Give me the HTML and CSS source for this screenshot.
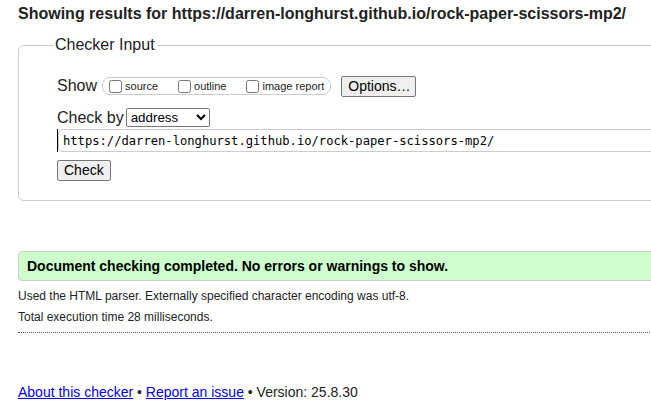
FILE: index.html
```html
<!DOCTYPE html>
<html lang="en">
<head>
<meta charset="utf-8">
<title>Showing results for https://darren-longhurst.github.io/rock-paper-scissors-mp2/ - Nu Html Checker</title>
<link rel="stylesheet" href="styles.css">
</head>
<body>
<div class="page">
  <h2 class="results-title">Showing results for https://darren-longhurst.github.io/rock-paper-scissors-mp2/</h2>
  <form class="checker">
    <fieldset class="checker-input">
      <legend class="legend">Checker Input</legend>
      <div class="row show-row">
        <span class="row-label">Show</span>
        <span class="show-group">
          <label class="opt"><input type="checkbox" class="cb"><span>source</span></label>
          <label class="opt"><input type="checkbox" class="cb"><span>outline</span></label>
          <label class="opt last"><input type="checkbox" class="cb"><span>image report</span></label>
        </span>
        <button type="button" class="btn options">Options…</button>
      </div>
      <div class="row checkby-row">
        <span class="row-label">Check by</span>
        <select class="select">
          <option>address</option>
          <option>file upload</option>
          <option>text input</option>
        </select>
      </div>
      <div class="url-row">
        <input class="url" type="text" value="https://darren-longhurst.github.io/rock-paper-scissors-mp2/">
      </div>
      <div class="submit-row">
        <button type="button" class="btn check">Check</button>
      </div>
    </fieldset>
  </form>
  <div class="success">Document checking completed. No errors or warnings to show.</div>
  <p class="details">Used the HTML parser. Externally specified character encoding was utf-8.</p>
  <p class="details second">Total execution time 28 milliseconds.</p>
  <hr class="divider">
  <p class="footer"><a href="#" class="link">About this checker</a> • <a href="#" class="link">Report an issue</a> • Version: 25.8.30</p>
</div>
</body>
</html>
```
FILE: styles.css
```css
html {
  overflow: hidden;
  background: #fff;
}
body {
  margin: 0;
  padding: 0 0 0 18px;
  font-family: "Liberation Sans", Arial, Helvetica, sans-serif;
  color: #222;
}
.page {
  width: 700px;
}
.results-title {
  margin: 0;
  padding-top: 5px;
  font-size: 16px;
  line-height: 18px;
  font-weight: bold;
  color: #222;
}
.checker {
  margin: 13px 0 0;
}
.checker-input {
  margin: 0;
  padding: 0 0 19px 38px;
  border: 1px solid #ccc;
  border-radius: 6px;
  min-width: 0;
}
.legend {
  margin-left: -4px;
  padding: 0 2px;
  font-size: 16px;
  line-height: 18px;
  color: #222;
}
.row {
  display: flex;
  align-items: center;
}
.row-label {
  font-size: 16px;
  line-height: 18px;
}
.show-row {
  margin-top: 21px;
  height: 22px;
}
.show-group {
  display: flex;
  align-items: center;
  height: 16px;
  margin-left: 5px;
  padding: 0 6px 0 2px;
  border: 1px solid #ccc;
  border-radius: 8px;
}
.opt {
  display: flex;
  align-items: center;
  font-size: 11px;
  line-height: 13px;
  margin-right: 16px;
}
.opt.last {
  margin-right: 0;
}
.cb {
  width: 13px;
  height: 13px;
  margin: 0 3px 0 4px;
}
.btn {
  font-family: "Liberation Sans", Arial, sans-serif;
  font-size: 14px;
  line-height: 16px;
  color: #000;
  background: #efefef;
  border: 1px solid #767676;
  border-radius: 2px;
  padding: 1px 6px 2px;
}
.options {
  margin-left: 10px;
  height: 21px;
  width: 75px;
}
.checkby-row {
  margin-top: 11px;
  height: 19px;
}
.select {
  margin-left: 2px;
  width: 84px;
  height: 19px;
  font-family: "Liberation Sans", Arial, sans-serif;
  font-size: 13.33px;
  color: #000;
}
.url-row {
  margin-top: 2px;
  display: flex;
  border-left: 1px solid #000;
}
.url {
  flex: 1;
  height: 23px;
  box-sizing: border-box;
  margin: 0;
  padding: 0 4px;
  border: 1px solid #ccc;
  border-radius: 4px 0 0 4px;
  font-family: "DejaVu Sans Mono", "Liberation Mono", monospace;
  font-size: 12.15px;
  color: #000;
  outline: none;
}
.submit-row {
  margin-top: 8px;
  display: flex;
}
.check {
  height: 21px;
}
.success {
  margin-top: 50px;
  padding: 6px 8px;
  font-size: 14px;
  line-height: 16px;
  font-weight: bold;
  color: #000;
  background: #ccffcc;
  border: 1px solid #ccc;
  border-radius: 4px 0 0 4px;
}
.details {
  margin: 8px 0 0;
  font-size: 12px;
  line-height: 14px;
}
.details.second {
  margin-top: 7px;
}
.divider {
  margin: 8px 0 0;
  height: 0;
  border: 0;
  border-top: 1px dotted #555;
}
.footer {
  margin: 51px 0 0;
  font-size: 14px;
  line-height: 16px;
}
.link {
  color: #00e;
  text-decoration: underline;
}
```
